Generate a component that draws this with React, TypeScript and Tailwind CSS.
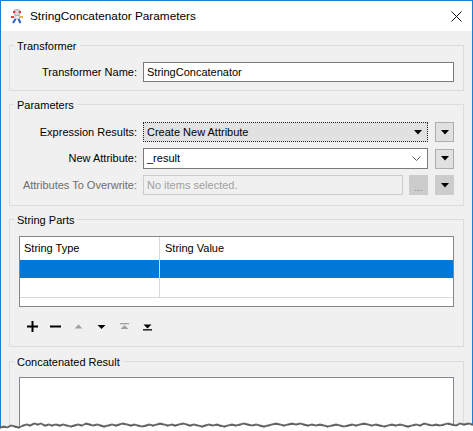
import React from "react";

const font = { fontFamily: '"Liberation Sans", Arial, sans-serif' };

function Down({ className = "" }: { className?: string }) {
  return (
    <svg width="8" height="5" viewBox="0 0 8 5" className={className}>
      <polygon points="0,0 8,0 4,4.5" fill="#000" />
    </svg>
  );
}

function SideButton({ disabled = false }: { disabled?: boolean }) {
  return (
    <div
      className={
        "w-[19px] h-[20px] ml-[7px] flex items-center justify-center border " +
        (disabled ? "bg-[#cccccc] border-[#cccccc]" : "bg-[#e1e1e1] border-[#adadad]")
      }
    >
      <Down />
    </div>
  );
}

function Group({ title, className = "", children }: { title: string; className?: string; children: React.ReactNode }) {
  return (
    <div className={"relative mx-[8px] border border-[#dcdcdc] " + className}>
      <span className="absolute -top-[7px] left-[4px] px-[3px] bg-[#f0f0f0] leading-[14px] text-[11px]">{title}</span>
      {children}
    </div>
  );
}

function Label({ children, disabled = false }: { children: React.ReactNode; disabled?: boolean }) {
  return (
    <div className={"w-[127px] text-right text-[11px] mr-[6px] " + (disabled ? "text-[#6d6d6d]" : "text-black")}>
      {children}
    </div>
  );
}

const tear =
  "M0 8 L4 7 L7 8 L11 6 L15 7 L19 8 L23 6 L27 5 L30 6 L34 4 L38 5 L41 4 L45 6 L49 5 L52 6 L56 5 L60 6 L63 5 L67 6 L71 7 L74 6 L78 5 L82 6 L86 4 L90 5 L93 6 L97 5 L101 6 L104 7 L108 6 L112 5 L116 6 L119 5 L123 4 L127 5 L131 6 L134 5 L138 6 L142 7 L146 6 L149 5 L153 6 L157 5 L160 4 L164 5 L168 6 L172 5 L175 6 L179 5 L183 4 L187 5 L190 6 L194 5 L198 6 L202 7 L205 6 L209 5 L213 6 L217 5 L220 6 L224 7 L228 6 L232 5 L236 6 L240 5 L244 4 L248 5 L252 6 L256 5 L260 6 L264 7 L268 6 L272 5 L276 4 L280 5 L284 6 L288 5 L292 4 L296 5 L300 4 L304 5 L308 6 L312 5 L316 6 L320 5 L324 6 L328 7 L332 6 L336 5 L340 6 L344 7 L348 6 L352 5 L356 6 L360 5 L364 4 L368 5 L372 6 L376 5 L380 6 L384 7 L388 6 L392 5 L396 6 L400 5 L404 6 L408 7 L412 6 L416 5 L420 6 L424 4 L428 5 L432 6 L436 5 L440 6 L444 5 L448 4 L452 5 L456 6 L460 4 L464 5 L468 4 L473 5";

export default function App() {
  return (
    <div className="w-[473px] h-[431px] relative overflow-hidden bg-white text-black" style={font}>
      <div className="w-[473px] h-[431px] border-x border-t border-[#1a7fd4] flex flex-col">
        {/* title bar */}
        <div className="h-[30px] bg-white flex items-center shrink-0">
          <svg width="16" height="16" viewBox="0 0 16 16" className="ml-[8px] mr-[5px]">
            <circle cx="8" cy="4.5" r="3.2" fill="#d9d9d9" stroke="#888" strokeWidth="0.6" />
            <rect x="4" y="3" width="2.2" height="2" fill="#d33" />
            <rect x="9.8" y="3" width="2.2" height="2" fill="#d33" />
            <rect x="6" y="7.5" width="4.5" height="3.5" fill="#e8e8e8" stroke="#999" strokeWidth="0.5" />
            <path d="M6.5 11 L4 15 M9.5 11 L11.5 15" stroke="#2a5bc7" strokeWidth="2" />
            <rect x="2" y="8" width="3" height="2" fill="#e04040" />
            <rect x="11" y="8" width="3" height="2" fill="#f0b040" />
          </svg>
          <span className="text-[11.8px] leading-[16px]">StringConcatenator Parameters</span>
          <svg width="11" height="11" viewBox="0 0 11 11" className="ml-auto mr-[10px]">
            <path d="M0.5 0.5 L10.5 10.5 M10.5 0.5 L0.5 10.5" stroke="#111" strokeWidth="1" />
          </svg>
        </div>

        {/* body */}
        <div className="flex-1 bg-[#f0f0f0] flex flex-col">
          <Group title="Transformer" className="mt-[14px] pt-[16px] pb-[8px]">
            <div className="flex items-center">
              <Label>Transformer Name:</Label>
              <div className="w-[311px] h-[20px] bg-white border border-[#7a7a7a] flex items-center pl-[3px] text-[11px]">
                StringConcatenator
              </div>
            </div>
          </Group>

          <Group title="Parameters" className="mt-[13px] pt-[17px] pb-[10px]">
            <div className="flex items-center h-[20px]">
              <Label>Expression Results:</Label>
              <div className="w-[285px] h-[20px] bg-[#e1e1e1] border border-dotted border-[#222] flex items-center pl-[3px] pr-[5px] text-[11px]">
                <span>Create New Attribute</span>
                <Down className="ml-auto" />
              </div>
              <SideButton />
            </div>
            <div className="flex items-center h-[21px] mt-[6px]">
              <Label>New Attribute:</Label>
              <div className="w-[285px] h-[21px] bg-white border border-[#7a7a7a] flex items-center pl-[3px] pr-[6px] text-[11px]">
                <span>_result</span>
                <svg width="9" height="5" viewBox="0 0 9 5" className="ml-auto">
                  <path d="M0.5 0.5 L4.5 4.5 L8.5 0.5" fill="none" stroke="#606060" strokeWidth="1" />
                </svg>
              </div>
              <SideButton />
            </div>
            <div className="flex items-center h-[20px] mt-[6px]">
              <Label disabled>Attributes To Overwrite:</Label>
              <div className="w-[260px] h-[20px] bg-[#f0f0f0] border border-[#cccccc] flex items-center pl-[3px] text-[11px] text-[#a0a0a0]">
                No items selected.
              </div>
              <div className="w-[19px] h-[20px] ml-[6px] bg-[#cccccc] flex items-end justify-center pb-[4px]">
                <span className="text-[#8a8a8a] text-[10px] leading-[6px]">...</span>
              </div>
              <SideButton disabled />
            </div>
          </Group>

          <Group title="String Parts" className="mt-[13px] pt-[16px] pb-[12px]">
            <div className="mx-[9px] h-[71px] bg-white border border-[#828790] flex flex-col text-[11px]">
              <div className="flex h-[23px]">
                <div className="w-[140px] border-r border-[#d9d9d9] flex items-center pl-[4px]">String Type</div>
                <div className="flex-1 flex items-center pl-[5px]">String Value</div>
              </div>
              <div className="flex h-[18px] bg-[#0078d7]">
                <div className="w-[140px] border-r border-[#d9d9d9]" />
                <div className="flex-1" />
              </div>
              <div className="flex h-[20px] border-b border-[#d9d9d9]">
                <div className="w-[140px] border-r border-[#d9d9d9]" />
                <div className="flex-1" />
              </div>
            </div>
            <div className="flex items-center h-[16px] mt-[11px] ml-[17px] gap-[12px]">
              <svg width="11" height="11" viewBox="0 0 11 11">
                <path d="M5.5 0 V11 M0 5.5 H11" stroke="#000" strokeWidth="2" />
              </svg>
              <svg width="11" height="11" viewBox="0 0 11 11">
                <path d="M0 5.5 H11" stroke="#000" strokeWidth="2" />
              </svg>
              <svg width="11" height="11" viewBox="0 0 11 11">
                <polygon points="1.5,7.5 9.5,7.5 5.5,3.5" fill="#a0a0a0" />
              </svg>
              <svg width="11" height="11" viewBox="0 0 11 11">
                <polygon points="1.5,4 9.5,4 5.5,8" fill="#000" />
              </svg>
              <svg width="11" height="11" viewBox="0 0 11 11">
                <rect x="1" y="2" width="9" height="1.3" fill="#a0a0a0" />
                <polygon points="1.5,8 9.5,8 5.5,4" fill="#a0a0a0" />
              </svg>
              <svg width="11" height="11" viewBox="0 0 11 11">
                <polygon points="1.5,3.5 9.5,3.5 5.5,7.5" fill="#000" />
                <rect x="1" y="8.2" width="9" height="1.3" fill="#000" />
              </svg>
            </div>
          </Group>

          <Group title="Concatenated Result" className="mt-[14px] pt-[15px] flex-1">
            <div className="mx-[9px] h-[60px] bg-white border border-[#828790]" />
          </Group>
        </div>
      </div>

      {/* torn paper edge */}
      <svg width="473" height="12" viewBox="0 0 473 12" className="absolute left-0 bottom-0">
        <defs>
          <filter id="sh" x="-5%" y="-50%" width="110%" height="200%">
            <feGaussianBlur stdDeviation="0.5" />
          </filter>
        </defs>
        <path d={tear + " L473 12 L0 12 Z"} fill="#6a6a6a" filter="url(#sh)" transform="translate(0,-0.5)" />
        <path d={tear + " L473 12 L0 12 Z"} fill="#ffffff" transform="translate(0,1.5)" />
        <path d={tear} fill="none" stroke="#555" strokeWidth="1" strokeDasharray="6 3 2 4" transform="translate(0,1)" />
      </svg>
    </div>
  );
}
